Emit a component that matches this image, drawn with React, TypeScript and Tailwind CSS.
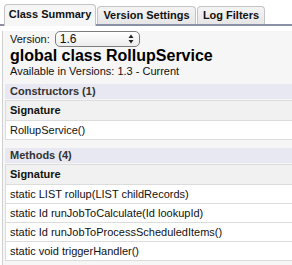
import React from "react";

const constructors = ["RollupService()"];
const methods = [
  "static LIST rollup(LIST childRecords)",
  "static Id runJobToCalculate(Id lookupId)",
  "static Id runJobToProcessScheduledItems()",
  "static void triggerHandler()",
];

const tabs = [
  { label: "Class Summary", width: "w-[92px]", active: true },
  { label: "Version Settings", width: "w-[99px]", active: false },
  { label: "Log Filters", width: "w-[68px]", active: false },
];

interface SectionProps {
  title: string;
  rows: string[];
  className?: string;
}

const Section: React.FC<SectionProps> = ({ title, rows, className }) => (
  <div className={className}>
    <div className="h-[15px] bg-[#e8e8f2] pl-[5px] text-[11px] font-bold leading-[15px] text-[#333]">
      {title}
    </div>
    <div className="mt-[1px] border-t border-l border-[#dcdcdc]">
      <div className="h-[20px] border-b border-[#dcdcdc] bg-[#f0f1f0] pl-[4px] text-[11px] font-bold leading-[19px] text-[#111]">
        Signature
      </div>
      {rows.map((row) => (
        <div
          key={row}
          className="h-[19px] border-b border-[#dcdcdc] bg-white pl-[4px] text-[11px] leading-[18px] text-[#111]"
        >
          {row}
        </div>
      ))}
    </div>
  </div>
);

const App: React.FC = () => {
  return (
    <div className="w-[292px] h-[265px] overflow-hidden bg-white font-['Liberation_Sans',Arial,sans-serif] text-[#111]">
      {/* tab strip */}
      <div className="flex items-end gap-[1px] pt-[4px] pl-[4px] border-b-2 border-[#8c90a6]">
        {tabs.map((tab) =>
          tab.active ? (
            <div
              key={tab.label}
              className={`${tab.width} h-[22px] -mb-[2px] pb-[2px] flex items-center justify-center rounded-t-[4px] border-x border-t border-[#c4c4c4] bg-[#f6f6f6] text-[11px] font-bold text-[#111]`}
            >
              {tab.label}
            </div>
          ) : (
            <div
              key={tab.label}
              className={`${tab.width} h-[18px] flex items-center justify-center rounded-t-[4px] border-x border-t border-[#c4c4c4] bg-gradient-to-b from-[#f4f4f4] to-[#e6e6e6] text-[11px] font-bold text-[#111]`}
            >
              {tab.label}
            </div>
          )
        )}
      </div>

      {/* content panel */}
      <div className="ml-[2px] h-[240px] border-l border-[#d0d0d0] bg-[#f6f6f6] pl-[1px]">
        <div className="pl-[6px]">
          <div className="mt-[5px] flex h-[16px] items-center gap-[5px]">
            <span className="text-[11px] leading-[16px]">Version:</span>
            <div className="flex h-[16px] w-[85px] items-center justify-between rounded-[5px] border border-[#7d7d7d] bg-gradient-to-b from-white to-[#ededed] pl-[4px] pr-[5px]">
              <span className="text-[12px] leading-[14px]">1.6</span>
              <svg width="6" height="10" viewBox="0 0 6 10">
                <path d="M3 0.5 L5.5 4 L0.5 4 Z" fill="#222" />
                <path d="M3 9.5 L5.5 6 L0.5 6 Z" fill="#222" />
              </svg>
            </div>
          </div>
          <div className="text-[16px] font-bold leading-[18px] text-black">
            global class RollupService
          </div>
          <div className="text-[11px] leading-[13px]">
            Available in Versions: 1.3 - Current
          </div>
        </div>

        <Section
          className="ml-[1px] mt-[6px]"
          title="Constructors (1)"
          rows={constructors}
        />
        <Section
          className="ml-[1px] mt-[8px]"
          title="Methods (4)"
          rows={methods}
        />
      </div>
    </div>
  );
};

export default App;
